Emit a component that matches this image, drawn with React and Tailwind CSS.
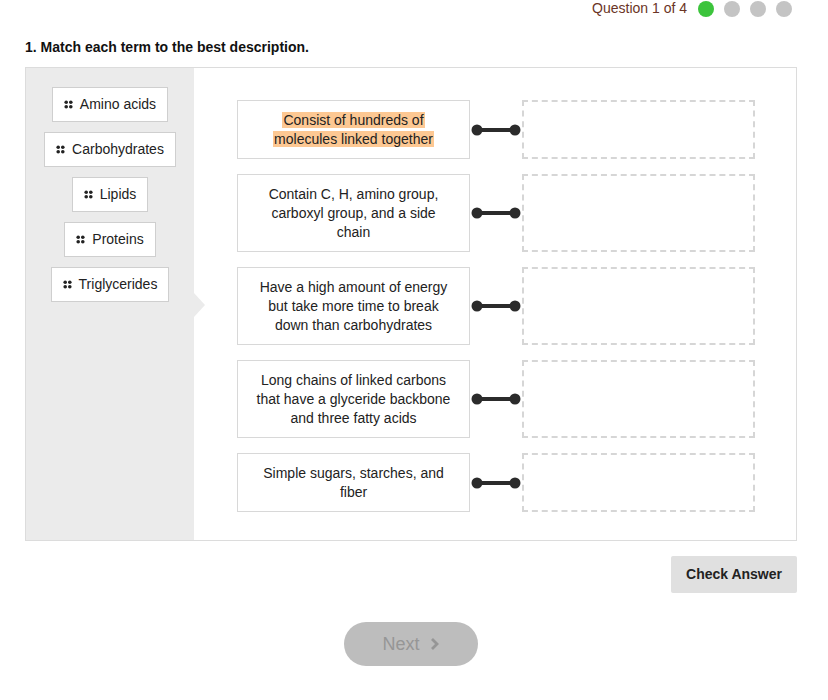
import React from 'react'

const terms = ['Amino acids', 'Carbohydrates', 'Lipids', 'Proteins', 'Triglycerides']

const descriptions = [
  { text: 'Consist of hundreds of molecules linked together', tall: false, hl: true },
  { text: 'Contain C, H, amino group, carboxyl group, and a side chain', tall: true },
  { text: 'Have a high amount of energy but take more time to break down than carbohydrates', tall: true },
  { text: 'Long chains of linked carbons that have a glyceride backbone and three fatty acids', tall: true },
  { text: 'Simple sugars, starches, and fiber', tall: false },
]

const Grip = () => (
  <svg width="9" height="9" viewBox="0 0 9 9" className="shrink-0">
    <circle cx="2.2" cy="2.2" r="1.8" fill="#222" />
    <circle cx="6.8" cy="2.2" r="1.8" fill="#222" />
    <circle cx="2.2" cy="6.8" r="1.8" fill="#222" />
    <circle cx="6.8" cy="6.8" r="1.8" fill="#222" />
  </svg>
)

const Connector = () => (
  <svg width="52" height="14" viewBox="0 0 52 14" className="shrink-0">
    <line x1="7" y1="7" x2="45" y2="7" stroke="#2b2b2b" strokeWidth="4" />
    <circle cx="7" cy="7" r="5.5" fill="#2b2b2b" />
    <circle cx="45" cy="7" r="5.5" fill="#2b2b2b" />
  </svg>
)

const App = () => {
  return (
    <div className="min-h-[700px] bg-white font-['Liberation_Sans',Arial,sans-serif] text-[#222]">
      <div className="flex items-center justify-end h-[17px] pr-[36px] gap-[10px]">
        <span className="text-[14px] text-[#6b3526] mr-[1px]">Question 1 of 4</span>
        <div className="flex gap-[10px]">
          <span className="w-[16px] h-[16px] rounded-full bg-[#3cc43c]" />
          <span className="w-[16px] h-[16px] rounded-full bg-[#c4c4c4]" />
          <span className="w-[16px] h-[16px] rounded-full bg-[#c4c4c4]" />
          <span className="w-[16px] h-[16px] rounded-full bg-[#c4c4c4]" />
        </div>
      </div>

      <div className="ml-[25px] w-[772px]">
        <h1 className="mt-[22px] text-[14px] font-bold leading-[16px] text-[#111]">
          1. Match each term to the best description.
        </h1>

        <div className="mt-[12px] flex border border-[#dcdcdc]">
          <div className="relative w-[168px] bg-[#ebebeb] pt-[19px] flex flex-col items-center gap-[10px]">
            {terms.map((t) => (
              <div
                key={t}
                className="flex items-center gap-[7px] h-[35px] px-[11px] bg-white border border-[#cfcfcf] text-[14px]"
              >
                <Grip />
                <span>{t}</span>
              </div>
            ))}
            <span className="absolute right-[-11px] top-[225px] w-0 h-0 border-y-[12px] border-y-transparent border-l-[11px] border-l-[#ebebeb]" />
          </div>

          <div className="flex-1 pt-[32px] pb-[28px] pl-[43px] flex flex-col gap-[15px]">
            {descriptions.map((d, i) => (
              <div key={i} className="flex items-center">
                <div
                  className={`w-[233px] ${d.tall ? 'h-[78px]' : 'h-[59px]'} border border-[#d8d8d8] flex items-center justify-center px-[16px] text-center text-[14px] leading-[19px]`}
                >
                  <p>
                    {d.hl ? (
                      <span className="bg-[#fdc893] box-decoration-clone px-[1px]">{d.text}</span>
                    ) : (
                      d.text
                    )}
                  </p>
                </div>
                <Connector />
                <div
                  className={`w-[233px] ${d.tall ? 'h-[78px]' : 'h-[59px]'} border-2 border-dashed border-[#d6d6d6]`}
                />
              </div>
            ))}
          </div>
        </div>

        <div className="flex justify-end mt-[15px]">
          <button className="w-[126px] h-[37px] bg-[#e0e0e0] rounded-[2px] text-[14px] font-semibold text-[#222]">
            Check Answer
          </button>
        </div>

        <div className="flex justify-center mt-[29px]">
          <button className="flex items-center justify-center gap-[10px] w-[134px] h-[44px] rounded-full bg-[#bdbdbd] text-[18px] text-[#969696]">
            <span>Next</span>
            <svg width="10" height="14" viewBox="0 0 10 14">
              <path d="M2 2 L7 7 L2 12" stroke="#969696" strokeWidth="2.8" fill="none" />
            </svg>
          </button>
        </div>
      </div>
    </div>
  )
}

export default App
